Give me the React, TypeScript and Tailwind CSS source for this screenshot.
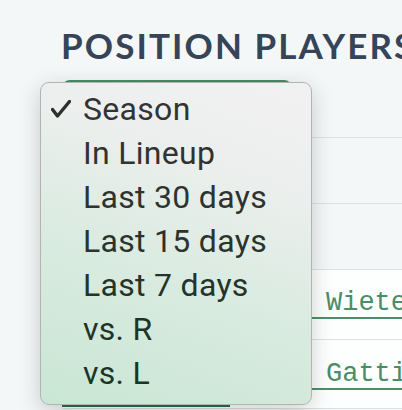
import React from "react";

const items: { label: string; color: string }[] = [
  { label: "Season", color: "text-[#333333]" },
  { label: "In Lineup", color: "text-[#313331]" },
  { label: "Last 30 days", color: "text-[#2f332f]" },
  { label: "Last 15 days", color: "text-[#2b332d]" },
  { label: "Last 7 days", color: "text-[#26332a]" },
  { label: "vs. R", color: "text-[#213328]" },
  { label: "vs. L", color: "text-[#1d3326]" },
];

export default function App() {
  return (
    <div className="relative w-[402px] h-[410px] overflow-hidden bg-[#f3f7f8]">
      <div
        className="h-[80px] pl-[61px] pt-[25px] whitespace-nowrap text-[35px] leading-[40px] font-bold tracking-[0.06em] text-[#374357]"
        style={{ fontFamily: "Lato, 'Noto Sans', sans-serif" }}
      >
        POSITION PLAYERS
      </div>

      <div className="pl-[62px]">
        <div className="w-[230px] h-[57px] border-t-2 border-[#4a8c64] rounded-t-[8px]" />
        <div className="w-[400px]">
          <div className="h-[66px] border-t border-[#dce2e3]" />
          <div className="h-[66px] border-t border-[#dce2e3]" />
          <div className="flex h-[70px] border-t border-[#dce2e3] bg-[#fdfefe]">
            <div className="w-[238px] shrink-0" />
            <div className="pt-[19px] shrink-0">
              <div
                className="pl-[26px] pr-[20px] h-[30px] leading-[28px] border-b-2 border-[#4d9068] text-[27px] text-[#4a8d66] whitespace-nowrap"
                style={{ fontFamily: "'Liberation Mono', monospace" }}
              >
                Wietelmann
              </div>
            </div>
          </div>
          <div className="flex h-[70px] border-t border-b border-[#dce2e3] bg-[#fdfefe]">
            <div className="w-[168px] shrink-0 flex flex-col justify-end pb-[1px]">
              <div className="h-[2px] bg-[#2f6b4a]" />
            </div>
            <div className="w-[70px] shrink-0" />
            <div className="pt-[20px] shrink-0">
              <div
                className="pl-[26px] pr-[20px] h-[30px] leading-[28px] border-b-2 border-[#4d9068] text-[27px] text-[#4a8d66] whitespace-nowrap"
                style={{ fontFamily: "'Liberation Mono', monospace" }}
              >
                Gattis
              </div>
            </div>
          </div>
        </div>
      </div>

      <div
        className="absolute left-[40px] top-[82px] w-[272px] h-[323px] rounded-[9px] border border-[#b3b3b3] shadow-[0_6px_22px_rgba(0,0,0,0.18)] bg-[linear-gradient(200deg,#f1f1f1_0%,#edefee_25%,#d9ebe0_60%,#c9e6d4_100%)] pt-[4px]"
        style={{ fontFamily: "Roboto, 'Liberation Sans', sans-serif" }}
      >
        {items.map((it, i) => (
          <div key={it.label} className="flex items-center h-[44px]">
            <div className="w-[42px] shrink-0 flex items-center justify-end pr-[12px]">
              {i === 0 && (
                <svg width="20" height="18" viewBox="0 0 20 18" className="text-[#2f2f2f]">
                  <path
                    d="M1.5 9.5 L6.5 16 L18.5 1.5"
                    fill="none"
                    stroke="currentColor"
                    strokeWidth="3.4"
                    strokeLinecap="round"
                    strokeLinejoin="round"
                  />
                </svg>
              )}
            </div>
            <span className={`text-[32px] leading-[44px] tracking-[0.3px] whitespace-nowrap ${it.color}`}>{it.label}</span>
          </div>
        ))}
      </div>
    </div>
  );
}
